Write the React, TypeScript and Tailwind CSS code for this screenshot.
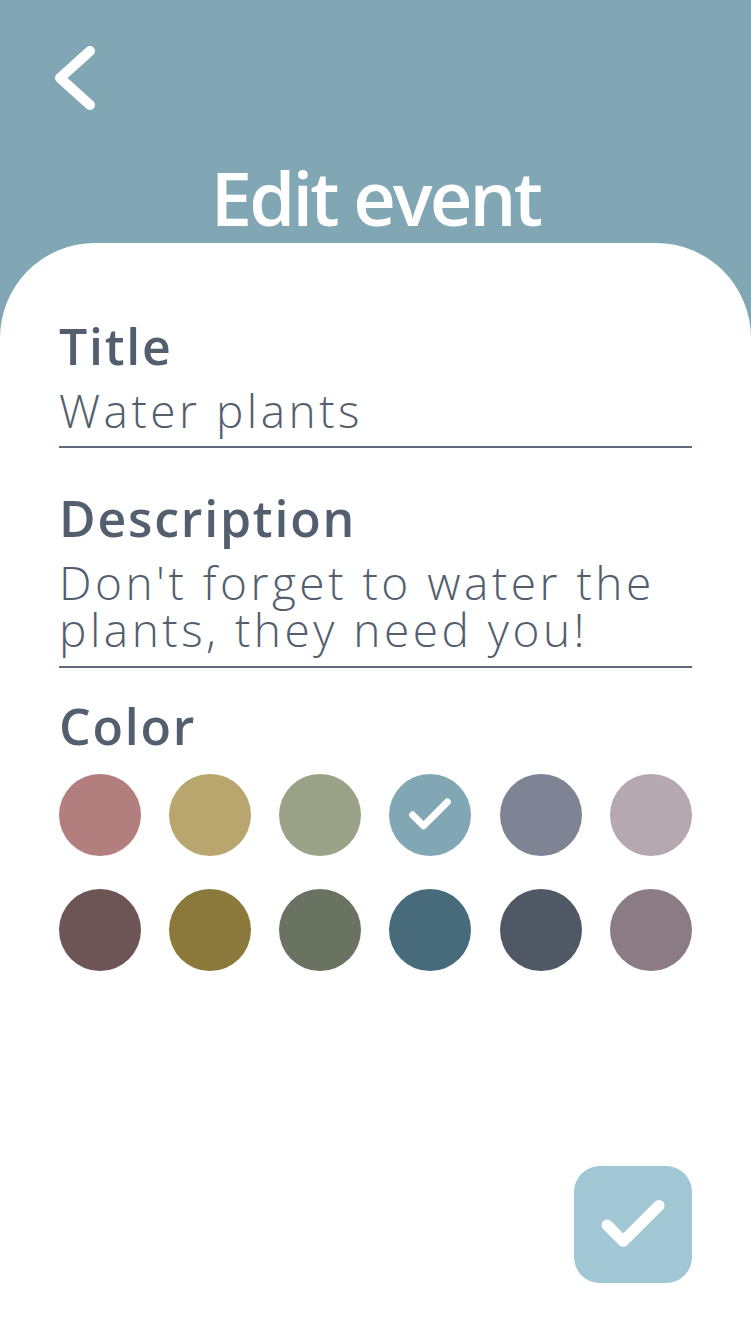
import React, { useState } from "react";
import { Check } from "lucide-react";

const colors = [
  "#B27F7E",
  "#B9A66F",
  "#9AA388",
  "#81A7B5",
  "#7E8494",
  "#B5A8B0",
  "#6E5555",
  "#8B783B",
  "#6A7262",
  "#476B7A",
  "#505866",
  "#8A7B85",
];

export default function App() {
  const [selected, setSelected] = useState(3);

  return (
    <div className="w-[751px] h-[1335px] bg-[#81A7B5] flex flex-col font-['Open_Sans',sans-serif]">
      <div className="pl-[52px] pt-[44px]">
        <svg width="46" height="68" viewBox="0 0 46 68" fill="none">
          <polyline
            points="38,7 8,34 38,61"
            stroke="white"
            strokeWidth="10"
            strokeLinecap="round"
            strokeLinejoin="round"
          />
        </svg>
      </div>

      <h1 className="text-center text-white text-[74px] leading-[72px] font-semibold [font-stretch:88%] tracking-[-2.8px] mt-[50px] mb-[9px]">
        Edit event
      </h1>

      <div className="flex-1 bg-white rounded-t-[95px] px-[59px] pt-[75px] pb-[52px] flex flex-col text-[#535E6E]">
        <label className="text-[50px] leading-[56px] font-semibold tracking-[1.8px]">Title</label>
        <div className="mt-[13px] text-[46px] leading-[47px] font-light tracking-[3.5px] border-b-2 border-[#5F6878] pb-[12px]">
          Water plants
        </div>

        <label className="mt-[42px] text-[50px] leading-[56px] font-semibold tracking-[1.8px]">Description</label>
        <div className="mt-[13px] text-[46px] leading-[47px] font-light tracking-[3.5px] border-b-2 border-[#5F6878] pb-[13px]">
          Don't forget to water the plants, they need you!
        </div>

        <label className="mt-[30px] text-[50px] leading-[56px] font-semibold tracking-[1.8px]">Color</label>
        <div className="grid grid-cols-6 gap-x-[28px] gap-y-[33px] mt-[20px]">
          {colors.map((c, i) => (
            <button
              key={c}
              onClick={() => setSelected(i)}
              className="w-[82px] h-[82px] rounded-full flex items-center justify-center"
              style={{ backgroundColor: c }}
            >
              {selected === i && <Check size={52} strokeWidth={3.2} className="text-white" />}
            </button>
          ))}
        </div>

        <button className="mt-auto self-end w-[118px] h-[117px] rounded-[26px] bg-[#A2C7D4] flex items-center justify-center">
          <Check size={78} strokeWidth={3.4} className="text-white" />
        </button>
      </div>
    </div>
  );
}
